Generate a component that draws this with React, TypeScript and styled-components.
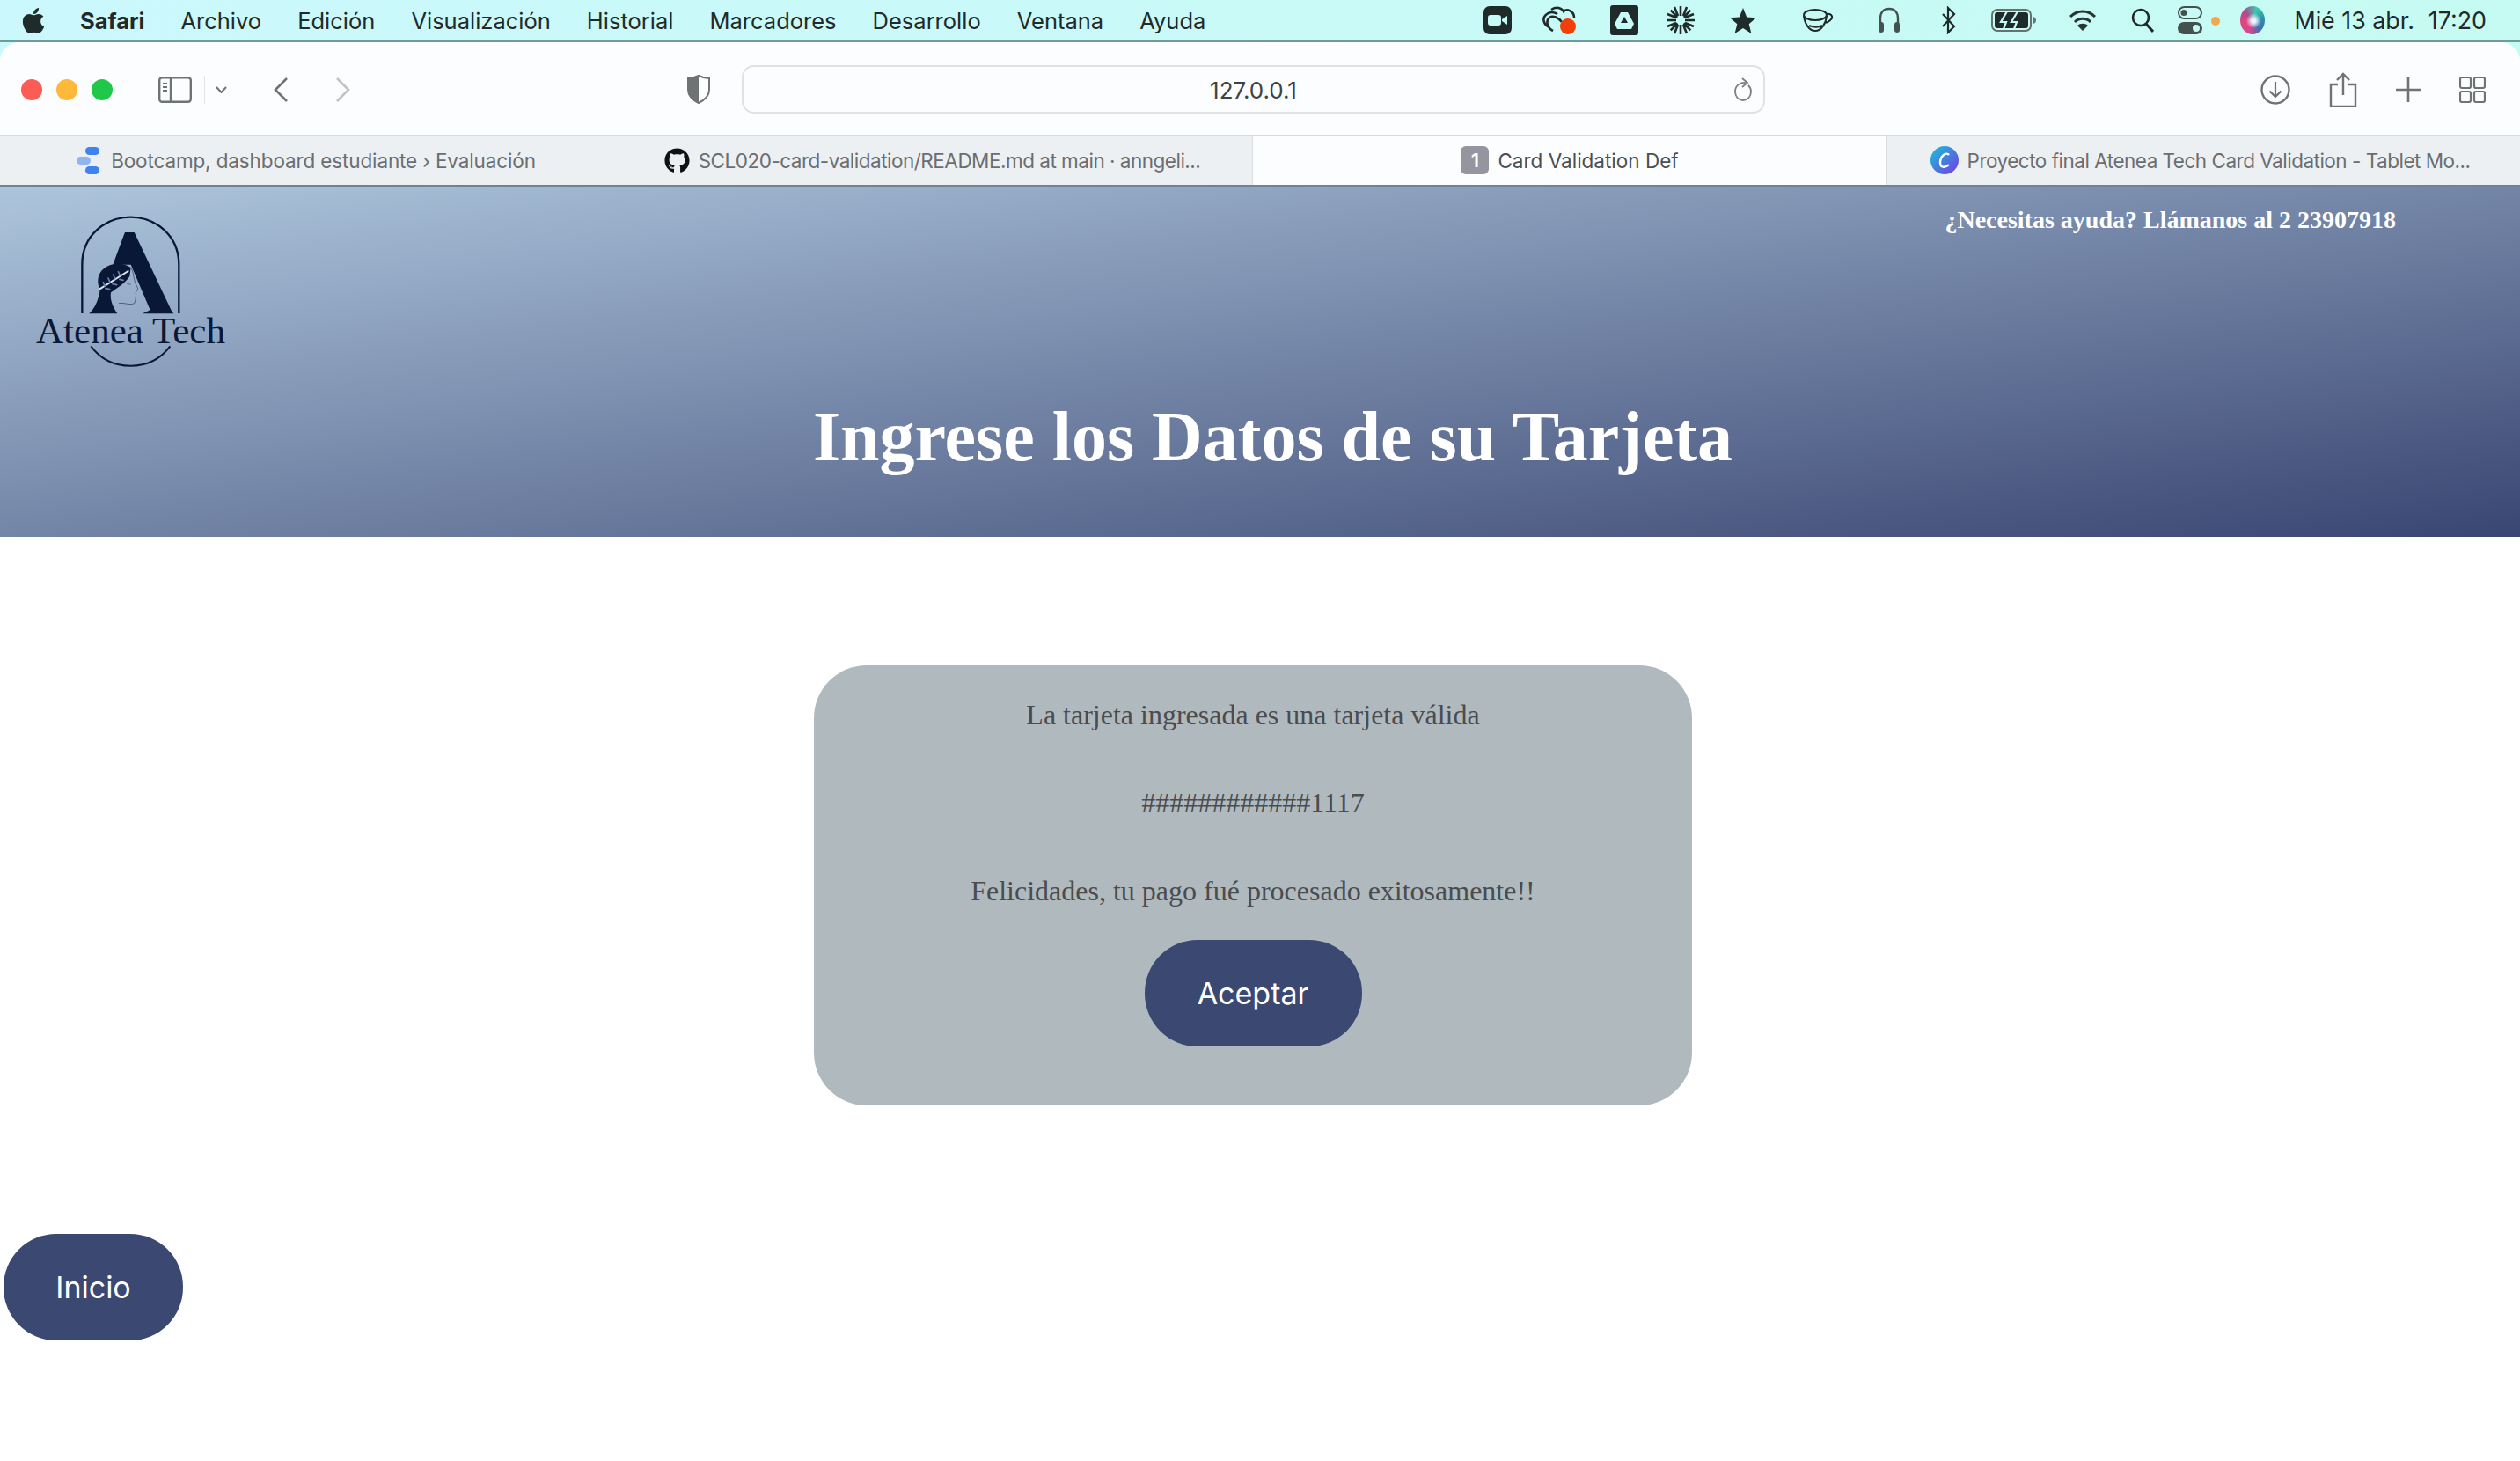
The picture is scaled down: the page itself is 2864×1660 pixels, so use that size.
import React from "react";
import styled, { createGlobalStyle } from "styled-components";
import { FaApple, FaGithub } from "react-icons/fa";

const GlobalStyle = createGlobalStyle`
  html, body {
    margin: 0;
    padding: 0;
    background: #fff;
    overflow: hidden;
  }
  * { box-sizing: border-box; }
`;

const menuItems = [
  "Archivo",
  "Edición",
  "Visualización",
  "Historial",
  "Marcadores",
  "Desarrollo",
  "Ventana",
  "Ayuda",
];

const AteneaLogo = () => (
  <LogoSvg viewBox="120 130 660 525">
    <path d="M280 466V300C280 200 360 138 445 138C530 138 610 200 610 300V466" fill="none" stroke="#0a1838" strokeWidth="7" />
    <path d="M310 578C345 625 395 645 445 645C495 645 545 625 580 578" fill="none" stroke="#0a1838" strokeWidth="6" />
    <path d="M426 190H458L585 458L592 467H486L512 455L446 300H385L420 205Z" fill="#0a1838" />
    <path d="M388 298C350 305 332 332 334 362C336 378 340 388 340 392C334 425 322 450 304 467H400C385 445 374 420 378 395C398 380 425 365 442 340L446 310C430 300 410 296 388 298Z" fill="#0a1838" />
    <path d="M340 383L437 322" stroke="#dfe6ef" strokeWidth="6" strokeLinecap="round" />
    <path d="M352 360l6 14M369 346l6 14M386 334l6 14M403 324l6 12M360 381l14 3M384 366l14 3M408 350l12 3" stroke="#6f80ad" strokeWidth="5" strokeLinecap="round" />
    <path d="M448 312C456 330 456 345 459 355C462 370 472 378 470 384C466 392 460 394 464 402C462 410 464 420 458 432C440 440 425 428 405 432M432 364L446 368" fill="none" stroke="#24365f" strokeWidth="2" />
    <LogoText x="123" y="567" textLength="645" lengthAdjust="spacingAndGlyphs">Atenea Tech</LogoText>
  </LogoSvg>
);

const App = () => {
  return (
    <Screen>
      <GlobalStyle />
      <MenuBar>
        <AppleSlot><FaApple /></AppleSlot>
        <AppName>Safari</AppName>
        {menuItems.map((item) => (
          <MenuItem key={item}>{item}</MenuItem>
        ))}
        <StatusArea>
          <StatusSlot $w={32}>
            <svg viewBox="0 0 32 32" width="32" height="32">
              <rect width="32" height="32" rx="7" fill="#1f2a2a" />
              <rect x="5" y="10" width="15" height="12" rx="3" fill="#c6fbf6" />
              <path d="M21 15l6-4v10l-6-4z" fill="#c6fbf6" />
            </svg>
          </StatusSlot>
          <StatusSlot $w={41} $gap={33}>
            <svg viewBox="0 0 41 34" width="41" height="34">
              <path d="M10 25C3 22 1 14 7 10C11 7 16 8 19 10M14 29C8 26 5 18 10 14C14 11 20 14 24 19M12 5C18 1 24 3 26 7C30 3 38 7 38 14" fill="none" stroke="#1f2a2a" strokeWidth="2.6" />
              <circle cx="31" cy="24" r="9" fill="#f23f07" />
            </svg>
          </StatusSlot>
          <StatusSlot $w={32} $gap={38}>
            <svg viewBox="0 0 32 34" width="32" height="34">
              <rect width="32" height="34" rx="3" fill="#1f2a2a" />
              <path d="M12 8h8l7 13-3 6H8l-3-6z" fill="#c6fbf6" />
              <path d="M16 13l4 7h-8z" fill="#1f2a2a" />
            </svg>
          </StatusSlot>
          <StatusSlot $w={32} $gap={32}>
            <svg viewBox="0 0 32 32" width="32" height="32">
              <path d="M16 0v11M16 21v11M0 16h11M21 16h11M4.700 4.700l7.800 7.800M19.500 19.500l7.800 7.800M27.300 4.700l-7.800 7.800M12.500 19.500l-7.800 7.800M9 1l4 10M19 21l4 10M23 1l-4 10M13 21l-4 10M1 9l10 4M21 19l10 4M31 9l-10 4M11 19l-10 4" stroke="#1f2a2a" strokeWidth="2.600" />
            </svg>
          </StatusSlot>
          <StatusSlot $w={30} $gap={40}>
            <svg viewBox="0 0 30 30" width="30" height="30">
              <path d="M15 1l4.200 10.500L30 12.300l-8.300 7 2.700 10.700L15 24l-9.400 6 2.700-10.700-8.300-7 10.800-.8z" fill="#1f2a2a" />
            </svg>
          </StatusSlot>
          <StatusSlot $w={35} $gap={53}>
            <svg viewBox="0 0 35 28" width="35" height="28">
              <ellipse cx="14" cy="8" rx="13" ry="6" fill="none" stroke="#1f2a2a" strokeWidth="2" />
              <path d="M1 9C2 18 7 26 14 26C21 26 26 18 27 9M27 7C33 6 35 11 31 14C29 16 27 17 25 17M7 20C12 22 18 22 22 20" fill="none" stroke="#1f2a2a" strokeWidth="2" />
            </svg>
          </StatusSlot>
          <StatusSlot $w={26} $gap={50}>
            <svg viewBox="0 0 26 30" width="26" height="30">
              <path d="M3 21V13C3 6 7 2 13 2C19 2 23 6 23 13V21" fill="none" stroke="#45514f" strokeWidth="2.400" />
              <rect x="1" y="17" width="6" height="12" rx="3" fill="#45514f" />
              <rect x="19" y="17" width="6" height="12" rx="3" fill="#45514f" />
            </svg>
          </StatusSlot>
          <StatusSlot $w={17} $gap={46}>
            <svg viewBox="0 0 17 32" width="17" height="32">
              <path d="M2 9l13 14-7 7V2l7 7L2 23" fill="none" stroke="#1f2a2a" strokeWidth="2.200" />
            </svg>
          </StatusSlot>
          <StatusSlot $w={51} $gap={40}>
            <svg viewBox="0 0 51 26" width="51" height="26">
              <rect x="1" y="1" width="44" height="24" rx="6" fill="none" stroke="#65726f" strokeWidth="2" />
              <rect x="4" y="4" width="38" height="18" rx="3" fill="#1f2a2a" />
              <path d="M48 9c2 1 3 2 3 4s-1 3-3 4z" fill="#65726f" />
              <path d="M18 3L11 15h6l-3 8M30 3l-7 12h6l-3 8" fill="none" stroke="#c6fbf6" strokeWidth="2.200" />
            </svg>
          </StatusSlot>
          <StatusSlot $w={32} $gap={37}>
            <svg viewBox="0 0 32 28" width="32" height="28">
              <path d="M2 10C10 2 22 2 30 10M7 16C12 11 20 11 25 16" fill="none" stroke="#2a3533" strokeWidth="3" />
              <path d="M16 26l-6-6c3-3 9-3 12 0z" fill="#2a3533" />
            </svg>
          </StatusSlot>
          <StatusSlot $w={26} $gap={39}>
            <svg viewBox="0 0 26 28" width="26" height="28">
              <circle cx="11" cy="11" r="9" fill="none" stroke="#1f2a2a" strokeWidth="2.600" />
              <path d="M17 18l8 9" stroke="#1f2a2a" strokeWidth="3" />
            </svg>
          </StatusSlot>
          <StatusSlot $w={48} $gap={27}>
            <svg viewBox="0 0 48 32" width="48" height="32">
              <rect x="1" y="1" width="26" height="13" rx="6.500" fill="none" stroke="#45514f" strokeWidth="2" />
              <circle cx="7" cy="7.500" r="3.500" fill="#45514f" />
              <rect y="18" width="28" height="14" rx="7" fill="#45514f" />
              <circle cx="21" cy="25" r="4" fill="#c6fbf6" />
              <circle cx="43" cy="17" r="5" fill="#f6a64a" />
            </svg>
          </StatusSlot>
          <SiriOrb />
          <ClockText>Mié 13 abr.</ClockText>
          <ClockText $gap={16}>17:20</ClockText>
        </StatusArea>
      </MenuBar>

      <BrowserWindow>
        <Toolbar>
          <TrafficLight $color="#fd5c55" />
          <TrafficLight $color="#feb93a" />
          <TrafficLight $color="#20c84a" />
          <ToolIcon $gap={36}>
            <svg viewBox="0 0 38 30" width="38" height="30">
              <rect x="1.200" y="1.200" width="35.600" height="27.600" rx="3" fill="none" stroke="#6f7374" strokeWidth="2.400" />
              <path d="M14 1v28" stroke="#6f7374" strokeWidth="2.400" />
              <path d="M5 8h5M5 12h5M5 16h5" stroke="#6f7374" strokeWidth="1.800" />
            </svg>
          </ToolIcon>
          <ToolDivider />
          <ToolIcon $gap={12}>
            <svg viewBox="0 0 13 8" width="13" height="8">
              <path d="M1 1l5.500 6L12 1" fill="none" stroke="#6f7374" strokeWidth="2" />
            </svg>
          </ToolIcon>
          <ToolIcon $gap={53}>
            <svg viewBox="0 0 17 28" width="17" height="28">
              <path d="M15 1L2 14l13 13" fill="none" stroke="#6f7374" strokeWidth="2.600" />
            </svg>
          </ToolIcon>
          <ToolIcon $gap={53}>
            <svg viewBox="0 0 17 28" width="17" height="28">
              <path d="M2 1l13 13L2 27" fill="none" stroke="#c0c3c4" strokeWidth="2.600" />
            </svg>
          </ToolIcon>
          <ToolIcon $gap={383}>
            <svg viewBox="0 0 26 33" width="26" height="33">
              <path d="M13 1C17 3 21 4 25 4V17C25 24 19 29 13 32C7 29 1 24 1 17V4C5 4 9 3 13 1Z" fill="#fbfdfe" stroke="#6f7374" strokeWidth="2" />
              <path d="M13 1C9 3 5 4 1 4V17C1 24 7 29 13 32Z" fill="#6f7374" />
            </svg>
          </ToolIcon>
          <AddressBar>
            <AddressText>127.0.0.1</AddressText>
            <ReloadIcon viewBox="0 0 22 28" width="22" height="28">
              <path d="M14 6C7 5 2 10 2 16C2 22 6 26 11 26C16 26 20 22 20 16C20 13 19 11 17 9" fill="none" stroke="#7b7f80" strokeWidth="1.800" />
              <path d="M10 1l6 5-6 5" fill="none" stroke="#7b7f80" strokeWidth="1.800" />
            </ReloadIcon>
          </AddressBar>
          <RightTools>
            <svg viewBox="0 0 34 34" width="34" height="34">
              <circle cx="17" cy="17" r="15.500" fill="none" stroke="#6f7374" strokeWidth="2.400" />
              <path d="M17 8v17M10.500 18.500L17 25l6.500-6.500" fill="none" stroke="#6f7374" strokeWidth="2.200" />
            </svg>
            <svg viewBox="0 0 32 40" width="32" height="40">
              <path d="M16 26V2M9 9l7-7 7 7M10 14H2v25h28V14h-8" fill="none" stroke="#6f7374" strokeWidth="2.400" />
            </svg>
            <svg viewBox="0 0 28 28" width="28" height="28">
              <path d="M14 0v28M0 14h28" stroke="#6f7374" strokeWidth="2.600" />
            </svg>
            <svg viewBox="0 0 30 30" width="30" height="30">
              <rect x="1" y="1" width="12" height="12" rx="2" fill="none" stroke="#6f7374" strokeWidth="2.200" />
              <rect x="17" y="1" width="12" height="12" rx="2" fill="none" stroke="#6f7374" strokeWidth="2.200" />
              <rect x="1" y="17" width="12" height="12" rx="2" fill="none" stroke="#6f7374" strokeWidth="2.200" />
              <rect x="17" y="17" width="12" height="12" rx="2" fill="none" stroke="#6f7374" strokeWidth="2.200" />
            </svg>
          </RightTools>
        </Toolbar>

        <TabStrip>
          <Tab>
            <svg viewBox="0 0 30 32" width="30" height="32">
              <rect x="11" y="1" width="16" height="9" rx="4.500" fill="#3f83ee" />
              <rect x="1" y="12" width="16" height="9" rx="4.500" fill="#8fb6f3" />
              <rect x="11" y="23" width="16" height="9" rx="4.500" fill="#3f83ee" />
            </svg>
            <TabLabel $spacing={-0.13}>Bootcamp, dashboard estudiante › Evaluación</TabLabel>
          </Tab>
          <Tab>
            <FaGithub size={29} color="#111" />
            <TabLabel $spacing={-0.5}>SCL020-card-validation/README.md at main · anngeli...</TabLabel>
          </Tab>
          <Tab $active>
            <TabBadge>1</TabBadge>
            <TabLabel $active>Card Validation Def</TabLabel>
          </Tab>
          <Tab>
            <svg viewBox="0 0 32 32" width="32" height="32">
              <defs>
                <linearGradient id="canvaFill" x1="0" y1="0" x2="1" y2="1">
                  <stop offset="0" stopColor="#12c6d6" />
                  <stop offset="1" stopColor="#7a36e8" />
                </linearGradient>
              </defs>
              <circle cx="16" cy="16" r="16" fill="url(#canvaFill)" />
              <path d="M21 10C18 6 11 11 11 19C11 25 17 25 21 21" fill="none" stroke="#fff" strokeWidth="2.400" />
            </svg>
            <TabLabel $spacing={-0.5}>Proyecto final Atenea Tech Card Validation - Tablet Mo...</TabLabel>
          </Tab>
        </TabStrip>

        <PageHeader>
          <HeaderTop>
            <AteneaLogo />
            <HelpText>¿Necesitas ayuda? Llámanos al 2 23907918</HelpText>
          </HeaderTop>
          <PageTitle>Ingrese los Datos de su Tarjeta</PageTitle>
        </PageHeader>

        <Content>
          <ResultCard>
            <CardLine>La tarjeta ingresada es una tarjeta válida</CardLine>
            <CardLine>############1117</CardLine>
            <CardLine>Felicidades, tu pago fué procesado exitosamente!!</CardLine>
            <PillButton>Aceptar</PillButton>
          </ResultCard>
          <HomeRow>
            <PillButton $small>Inicio</PillButton>
          </HomeRow>
        </Content>
      </BrowserWindow>
    </Screen>
  );
};
export default App;

const Screen = styled.div`
  width: 2864px;
  height: 1660px;
  overflow: hidden;
  background: linear-gradient(to right, #cbf8fc, #c6fbf3);
  font-family: "Inter", "Liberation Sans", sans-serif;
`;
const MenuBar = styled.div`
  height: 48px;
  display: flex;
  align-items: center;
  padding: 0 38px 0 24px;
  border-bottom: 2px solid #6f9c9b;
  color: #1f2a2a;
  font-size: 25.500px;
`;
const AppleSlot = styled.span`
  width: 28px;
  height: 34px;
  font-size: 33px;
  display: flex;
  align-items: center;
  justify-content: center;
`;
const AppName = styled.span`
  margin-left: 39px;
  font-weight: 700;
`;
const MenuItem = styled.span`
  margin-left: 41px;
`;
const StatusArea = styled.div`
  margin-left: auto;
  display: flex;
  align-items: center;
`;
const StatusSlot = styled.span<{ $w: number; $gap?: number }>`
  width: ${(p) => p.$w}px;
  margin-left: ${(p) => p.$gap ?? 0}px;
  display: flex;
  align-items: center;
  justify-content: center;
`;
const SiriOrb = styled.span`
  width: 28px;
  height: 32px;
  margin-left: 23px;
  border-radius: 50%;
  background:
    radial-gradient(circle at 55% 52%, #e8f4ff 0 10%, rgba(232, 244, 255, 0) 38%),
    conic-gradient(from 20deg, #38c9ad, #2f8fa8, #3f6fb0, #d9478a, #e0467f, #b04a90, #38c9ad);
`;
const ClockText = styled.span<{ $gap?: number }>`
  margin-left: ${(p) => p.$gap ?? 33}px;
  font-size: 26.800px;
`;
const BrowserWindow = styled.div`
  height: 1612px;
  background: #fff;
  border-radius: 22px 22px 0 0;
  overflow: hidden;
`;
const Toolbar = styled.div`
  height: 106px;
  background: #fbfdfe;
  display: flex;
  align-items: center;
  padding: 2px 39px 0 24px;
  border-bottom: 1px solid #d8dbdc;
`;
const TrafficLight = styled.span<{ $color: string }>`
  width: 24px;
  height: 24px;
  border-radius: 50%;
  margin-right: 16px;
  background: ${(p) => p.$color};
`;
const ToolIcon = styled.span<{ $gap: number }>`
  margin-left: ${(p) => p.$gap}px;
  display: flex;
  align-items: center;
`;
const ToolDivider = styled.span`
  width: 1px;
  height: 32px;
  margin-left: 14px;
  background: #e3e5e6;
`;
const AddressBar = styled.div`
  margin-left: 36px;
  width: 1163px;
  height: 55px;
  padding-top: 2px;
  border: 2px solid #dfe3e4;
  border-radius: 14px;
  display: flex;
  align-items: center;
  justify-content: center;
  position: relative;
`;
const AddressText = styled.span`
  font-size: 26px;
  color: #3f4345;
`;
const ReloadIcon = styled.svg`
  position: absolute;
  right: 12px;
  top: 12px;
`;
const RightTools = styled.div`
  margin-left: auto;
  display: flex;
  align-items: center;
  gap: 44px;
`;
const TabStrip = styled.div`
  height: 58px;
  display: grid;
  grid-template-columns: 703px 720px 721px 720px;
  border-bottom: 2px solid #6f8299;
`;
const Tab = styled.div<{ $active?: boolean }>`
  display: flex;
  align-items: center;
  justify-content: center;
  gap: 10px;
  padding-right: ${(p) => (p.$active ? "0" : "8px")};
  background: ${(p) => (p.$active ? "#fbfdfe" : "#edf0f2")};
  border-left: 1px solid #dcdfe1;
  &:first-child {
    border-left: none;
  }
`;
const TabLabel = styled.span<{ $active?: boolean; $spacing?: number }>`
  font-size: 22.500px;
  letter-spacing: ${(p) => p.$spacing ?? 0}px;
  color: ${(p) => (p.$active ? "#4b4f52" : "#6a6e71")};
  white-space: nowrap;
`;
const TabBadge = styled.span`
  width: 32px;
  height: 32px;
  border-radius: 6px;
  background: #94959f;
  color: #fff;
  font-size: 22px;
  font-weight: 600;
  display: flex;
  align-items: center;
  justify-content: center;
`;
const PageHeader = styled.header`
  height: 398px;
  padding: 23px 141px 0 40px;
  background: linear-gradient(to bottom right, #adc5dc, #3a4672);
  font-family: "Liberation Serif", serif;
  color: #fff;
`;
const HeaderTop = styled.div`
  display: flex;
  justify-content: space-between;
  align-items: flex-start;
  height: 184px;
`;
const LogoSvg = styled.svg`
  width: 220px;
  height: 175px;
  margin-top: 9px;
`;
const LogoText = styled.text`
  font-family: "Liberation Serif", serif;
  font-size: 128px;
  fill: #0a1838;
`;
const HelpText = styled.div`
  font-size: 28px;
  line-height: 29px;
  font-weight: 700;
`;
const PageTitle = styled.h1`
  margin: 31px 0 0 0;
  text-align: center;
  font-size: 80px;
  line-height: 92px;
  font-weight: 700;
  padding-left: 130px;
`;
const Content = styled.main`
  background: #fff;
  padding-top: 146px;
`;
const ResultCard = styled.section`
  width: 998px;
  margin: 0 auto;
  transform: translateX(-8px);
  padding: 38px 0 67px;
  background: #b0babe;
  border-radius: 60px;
  display: flex;
  flex-direction: column;
  align-items: center;
  gap: 63px;
  font-family: "Liberation Serif", serif;
`;
const CardLine = styled.p`
  margin: 0;
  font-size: 32px;
  line-height: 37px;
  color: #4a4c4e;
`;
const PillButton = styled.button<{ $small?: boolean }>`
  width: ${(p) => (p.$small ? "204px" : "247px")};
  height: 121px;
  margin-top: ${(p) => (p.$small ? "0" : "-26px")};
  border: 0;
  border-radius: 60px;
  background: #3b4872;
  color: #fff;
  font-family: "Inter", "Liberation Sans", sans-serif;
  font-size: 34px;
  cursor: pointer;
`;
const HomeRow = styled.div`
  padding: 146px 0 0 4px;
`;
